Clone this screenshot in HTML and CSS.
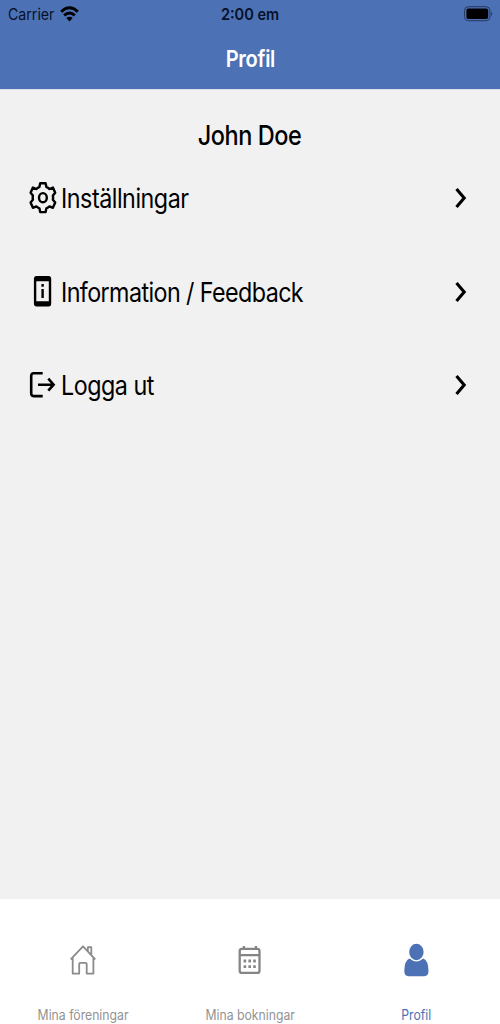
FILE: index.html
```html
<!DOCTYPE html>
<html lang="sv">
<head>
<meta charset="utf-8">
<title>Profil</title>
<link rel="stylesheet" href="styles.css">
</head>
<body>
<div class="app">
  <header class="header">
    <div class="status">
      <div class="status-left">
        <span class="carrier">Carrier</span>
        <svg class="wifi" width="19" height="16" viewBox="0 0 19 16"><g fill="none" stroke="#000" stroke-width="2.9"><path d="M1.2 5.7Q9.5-2 17.8 5.7"/><path d="M4.2 9.4Q9.5 4.4 14.8 9.4"/></g><path d="M6.4 12Q9.5 9.4 12.6 12L9.5 15.4Z"/></svg>
      </div>
      <span class="time">2:00 em</span>
      <svg class="battery" width="30" height="16" viewBox="0 0 30 16"><rect x=".5" y=".7" width="25.5" height="14" rx="4" fill="none" stroke="#27395d"/><rect x="2.4" y="2.6" width="21.8" height="10.3" rx="2"/><path d="M27.3 5.2q1.8 2.4 0 5z" fill="#1c2b49"/></svg>
    </div>
    <h1 class="title"><span>Profil</span></h1>
  </header>
  <main class="content">
    <h2 class="name"><span>John Doe</span></h2>
    <a class="row">
      <svg class="icon" width="28" height="34" viewBox="0 0 28 34"><g fill="none" stroke="#000" stroke-width="2.4" stroke-linejoin="round"><path d="M11.2 2.3H16.6L17.4 6.1Q19 6.6 20.5 8L23.9 6.6L26.2 11.8L23.9 14.6Q24.3 16.7 23.9 18.8L26.2 21.6L23.9 26.8L20.5 25.4Q19 26.8 17.4 27.3L16.6 31.1H11.2L10.4 27.3Q8.8 26.8 7.3 25.4L3.9 26.8L1.6 21.6L3.9 18.8Q3.5 16.7 3.9 14.6L1.6 11.8L3.9 6.6L7.3 8Q8.8 6.6 10.4 6.1Z"/><ellipse cx="13.9" cy="16.7" rx="3.9" ry="4.6"/></g></svg>
      <span class="label">Inställningar</span>
      <svg class="chevron" width="14" height="24" viewBox="0 0 14 24"><path d="M2.5 3L10.2 12L2.5 21" fill="none" stroke="#000" stroke-width="3.1"/></svg>
    </a>
    <a class="row">
      <svg class="icon" width="28" height="34" viewBox="0 0 28 34"><path fill-rule="evenodd" d="M7.7 1H19.7Q22.2 1 22.2 4V28.5Q22.2 31.5 19.7 31.5H7.7Q4.9 31.5 4.9 28.5V4Q4.9 1 7.7 1ZM7.3 6.3V26.2H19.8V6.3Z"/><path d="M12.4 9H14.8V11.7H12.4ZM12.4 14.1H14.8V23H12.4Z"/></svg>
      <span class="label info">Information / Feedback</span>
      <svg class="chevron" width="14" height="24" viewBox="0 0 14 24"><path d="M2.5 3L10.2 12L2.5 21" fill="none" stroke="#000" stroke-width="3.1"/></svg>
    </a>
    <a class="row">
      <svg class="icon" width="28" height="34" viewBox="0 0 28 34"><g fill="none" stroke="#000" stroke-width="2.6"><path d="M13.7 5.3H4.5Q2.2 5.3 2.2 8V25.3Q2.2 28.1 4.5 28.1H13.7"/><path d="M9 16.7H25M19.3 10.7L24.6 16.7L19.3 22.7"/></g></svg>
      <span class="label">Logga ut</span>
      <svg class="chevron" width="14" height="24" viewBox="0 0 14 24"><path d="M2.5 3L10.2 12L2.5 21" fill="none" stroke="#000" stroke-width="3.1"/></svg>
    </a>
  </main>
  <nav class="tabs">
    <a class="tab">
      <svg width="28" height="36" viewBox="0 0 28 36"><g fill="none" stroke="#8b8b8b" stroke-width="1.8" stroke-linejoin="round"><path d="M1.7 17.4L14 4.3L26.3 17.4M3.7 15.8V31.6H10.2V22Q10.2 20.8 11.2 20.8H16.6Q17.7 20.8 17.7 22V31.6H24.4V15.8M18.9 9V5.2H22.3V12.8"/></g></svg>
      <span class="tab-label">Mina föreningar</span>
    </a>
    <a class="tab">
      <svg width="28" height="36" viewBox="0 0 28 36"><g fill="none" stroke="#858585" stroke-width="2.3"><rect x="3.7" y="6.8" width="19.8" height="24.1" rx="2.2"/><path d="M4 13.2H23.5M7.9 4V7M19.9 4V7"/></g><g fill="#858585"><path d="M7.6 17.6H10.2V20.4H7.6ZM12.4 17.6H15V20.4H12.4ZM17.2 17.6H19.8V20.4H17.2ZM7.6 23.2H10.2V26H7.6ZM12.4 23.2H15V26H12.4ZM17.2 23.2H19.8V26H17.2Z"/></g></svg>
      <span class="tab-label">Mina bokningar</span>
    </a>
    <a class="tab active">
      <svg width="28" height="36" viewBox="0 0 28 36"><g fill="#4c71b4"><ellipse cx="13.4" cy="10" rx="7.2" ry="8.2"/><path d="M6.5 16.5Q13.4 22.3 20.3 16.5Q25.3 18.4 25.5 29Q25.5 34.2 21.2 34.2H5.6Q1.3 34.2 1.3 29Q1.5 18.4 6.5 16.5Z"/></g></svg>
      <span class="tab-label">Profil</span>
    </a>
  </nav>
</div>
</body>
</html>
```
FILE: styles.css
```css
* { box-sizing: border-box; }
body { margin: 0; font-family: Inter, "Liberation Sans", sans-serif; color: #000; }
.app { width: 500px; height: 1024px; display: flex; flex-direction: column; background: #f1f1f1; }
.header { height: 90px; background: #4c71b4; border-bottom: 1px solid #dcdfe6; }
.status { height: 28px; display: grid; grid-template-columns: 1fr auto 1fr; align-items: center; padding: 0 6px 0 8px; }
.status-left { display: flex; align-items: center; }
.carrier { width: 52px; font-size: 16px; color: #07112a; transform: scaleX(.885); transform-origin: left; }
.wifi { margin-top: -1px; }
.time { font-size: 16px; font-weight: 600; color: #07112a; transform: translateX(-1px) scaleX(.91); }
.battery { justify-self: end; }
.title { margin: 0; height: 61px; display: flex; align-items: center; justify-content: center; color: #fff; font-size: 23px; font-weight: 600; letter-spacing: -.3px; }
.title span { transform: scaleX(.87); }
.content { flex: 1; }
.name { margin: 0; height: 61px; padding-top: 30px; display: flex; justify-content: center; font-size: 27px; line-height: 31px; font-weight: 500; letter-spacing: -.5px; }
.name span { transform: scaleX(.87); }
.row { height: 93.7px; display: flex; align-items: center; padding: 0 32px 0 29px; }
.icon { flex: none; margin-right: 4px; }
.label { flex: 1; font-size: 26.5px; letter-spacing: -.55px; white-space: nowrap; transform: scaleX(.88); transform-origin: left; }
.info { letter-spacing: -.68px; }
.chevron { flex: none; }
.tabs { height: 125px; flex: none; display: grid; grid-template-columns: repeat(3, 1fr); background: #fff; }
.tab { display: flex; flex-direction: column; align-items: center; padding-top: 43px; color: #929292; }
.tab-label { margin-top: 28px; font-size: 14px; line-height: 18px; transform: scaleX(.873); white-space: nowrap; }
.active { color: #4c71b4; }
```
